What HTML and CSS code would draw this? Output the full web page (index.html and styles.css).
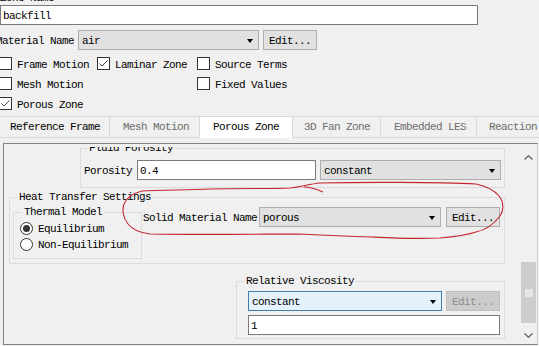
FILE: index.html
```html
<!DOCTYPE html>
<html>
<head>
<meta charset="utf-8">
<link rel="stylesheet" href="styles.css">
</head>
<body>
<div class="win">
  <div class="zone-label">Zone Name</div>
  <div class="textbox top-input">backfill</div>
  <div class="mat-row">
    <span class="lbl mat-lbl">Material Name</span>
    <div class="combo mat-combo"><span>air</span><i class="arrow"></i></div>
    <div class="btn">Edit...</div>
  </div>
  <div class="checks">
    <label class="chk"><i class="box"></i><span>Frame Motion</span></label>
    <label class="chk"><i class="box"><svg viewBox="0 0 11 11" width="11" height="11"><polyline points="1.5,5.5 4,8 9.5,2.5" fill="none" stroke="#4a4a4a" stroke-width="1"/></svg></i><span>Laminar Zone</span></label>
    <label class="chk"><i class="box"></i><span>Source Terms</span></label>
    <label class="chk"><i class="box"></i><span>Mesh Motion</span></label>
    <span></span>
    <label class="chk"><i class="box"></i><span>Fixed Values</span></label>
    <label class="chk"><i class="box"><svg viewBox="0 0 11 11" width="11" height="11"><polyline points="1.5,5.5 4,8 9.5,2.5" fill="none" stroke="#4a4a4a" stroke-width="1"/></svg></i><span>Porous Zone</span></label>
  </div>
  <div class="tabs">
    <div class="tab t1">Reference Frame</div>
    <div class="tab t2 dis">Mesh Motion</div>
    <div class="tab t3 active">Porous Zone</div>
    <div class="tab t4 dis">3D Fan Zone</div>
    <div class="tab t5 dis">Embedded LES</div>
    <div class="tab t6 dis">Reaction</div>
  </div>
  <div class="panel">
    <div class="scrollbox">
      <div class="viewport">
        <div class="clip">
          <div class="content">
            <fieldset class="grp fluid">
              <legend>Fluid Porosity</legend>
              <div class="row">
                <span class="lbl por-lbl">Porosity</span>
                <div class="textbox por-input">0.4</div>
                <div class="combo por-combo"><span>constant</span><i class="arrow"></i></div>
              </div>
            </fieldset>
            <fieldset class="grp heat">
              <legend>Heat Transfer Settings</legend>
              <div class="heat-body">
                <fieldset class="grp thermal">
                  <legend>Thermal Model</legend>
                  <div class="radios">
                    <label class="rad"><i class="circ on"></i><span>Equilibrium</span></label>
                    <label class="rad"><i class="circ"></i><span>Non-Equilibrium</span></label>
                  </div>
                </fieldset>
                <div class="row solid-row">
                  <span class="lbl solid-lbl">Solid Material Name</span>
                  <div class="combo solid-combo"><span>porous</span><i class="arrow"></i></div>
                  <div class="btn solid-btn">Edit...</div>
                </div>
              </div>
            </fieldset>
            <fieldset class="grp visc">
              <legend>Relative Viscosity</legend>
              <div class="row">
                <div class="combo focus visc-combo"><span>constant</span><i class="arrow"></i></div>
                <div class="btn disabled">Edit...</div>
              </div>
              <div class="textbox visc-input">1</div>
            </fieldset>
          </div>
        </div>
      </div>
      <div class="sbar">
        <div class="sarrow up"><svg viewBox="0 0 9 5" width="9" height="5"><polyline points="0.5,4.5 4.5,0.8 8.5,4.5" fill="none" stroke="#606060" stroke-width="1.3"/></svg></div>
        <div class="strack"><div class="thumb"><i class="grip"></i></div></div>
        <div class="sarrow"><svg viewBox="0 0 9 5" width="9" height="5"><polyline points="0.5,0.5 4.5,4.2 8.5,0.5" fill="none" stroke="#606060" stroke-width="1.3"/></svg></div>
      </div>
    </div>
  </div>
  <svg class="ink" width="539" height="346" viewBox="0 0 539 346">
    <path d="M323,200 C316,197 310,195 304,195 M320,191 C360,190 440,190 476,192 C486,194 494,198 499,204 C504,210 504,218 500,224 C494,232 486,238 476,240 C464,244 452,245 440,246 C410,247 392,246 372,245 C340,244 320,243 300,242 C270,242 200,243 150,242 C140,241 133,238 128,232 C123,226 122,218 124,212 C127,205 134,201 142,199 C160,198 190,198 210,197 C240,196 270,197 290,196 C300,195 310,192 320,191" fill="none" stroke="#c4262e" stroke-width="1.1"/>
  </svg>
</div>
</body>
</html>
```

FILE: styles.css
```css
* { box-sizing: border-box; }
html, body { margin: 0; padding: 0; }
body {
  width: 539px;
  height: 346px;
  overflow: hidden;
  background: #f0f0f0;
  color: #000;
  font-family: "Liberation Mono", "DejaVu Sans Mono", monospace;
  font-size: 11px;
  line-height: 12px;
  letter-spacing: -0.6px;
}
.win { position: relative; width: 539px; height: 346px; }

.zone-label { margin-top: -8px; height: 12px; margin-bottom: 1px; }

.textbox {
  height: 20px;
  background: #fff;
  border: 1px solid #7a7a7a;
  line-height: 18px;
  padding: 1px 0 0 2px;
  white-space: nowrap;
}
.top-input { width: 478px; }

.lbl { line-height: 20px; height: 20px; padding-top: 1px; white-space: nowrap; }
.row { display: flex; align-items: center; }

.mat-row { display: flex; align-items: center; margin-top: 5px; margin-left: -4px; }
.mat-lbl { width: 82px; }
.combo {
  position: relative;
  height: 20px;
  background: #e1e1e1;
  border: 1px solid #adadad;
  line-height: 18px;
  padding: 1px 0 0 3px;
  white-space: nowrap;
}
.combo .arrow {
  position: absolute;
  right: 5px;
  top: 8px;
  width: 0; height: 0;
  border-left: 3.5px solid transparent;
  border-right: 3.5px solid transparent;
  border-top: 4px solid #000;
}
.mat-combo { width: 181px; }
.btn {
  height: 20px;
  width: 54px;
  background: #e1e1e1;
  border: 1px solid #adadad;
  line-height: 18px;
  padding-top: 1px;
  text-align: center;
  margin-left: 4px;
}
.btn.disabled { background: #cccccc; border-color: #bfbfbf; color: #8c8c8c; }

.checks {
  display: grid;
  grid-template-columns: 98px 100px auto;
  grid-auto-rows: 13px;
  row-gap: 7px;
  margin-top: 7px;
  margin-left: -1px;
}
.chk { display: flex; align-items: flex-start; white-space: nowrap; }
.chk span { line-height: 13px; padding-top: 2px; }
.box {
  width: 13px; height: 13px;
  border: 1px solid #333;
  background: #fff;
  margin-right: 5px;
  flex: none;
  display: block;
}
.box svg { display: block; }

.tabs {
  display: flex;
  margin-top: 6px;
  height: 22px;
  border-bottom: 1px solid #d9d9d9;
  white-space: nowrap;
}
.tab {
  height: 21px;
  line-height: 21px;
  border-top: 1px solid #d9d9d9;
  border-right: 1px solid #d9d9d9;
  background: #f0f0f0;
  flex: none;
}
.tab.dis { color: #6d6d6d; }
.t1 { width: 110px; padding-left: 10px; }
.t2 { width: 90px; padding-left: 13px; }
.t3 { width: 93px; padding-left: 13px; }
.t4 { width: 88px; padding-left: 11px; }
.t5 { width: 96px; padding-left: 13px; }
.t6 { width: 80px; padding-left: 12px; border-right: none; }
.tab.active { background: #fff; height: 22px; }

.panel { padding-top: 5px; }
.scrollbox {
  display: flex;
  margin-left: 3px;
  width: 535px;
  height: 202px;
  border: 1px solid #828282;
  border-right-color: #d0d0d0;
}
.viewport { width: 516px; height: 200px; padding-top: 3px; }
.clip { height: 197px; overflow: hidden; }
.content { margin-top: -5px; }

.grp {
  margin: 0;
  padding: 0;
  border: 1px solid #dcdcdc;
  min-width: 0;
}
.grp legend {
  padding: 0 2px;
  margin-left: 7px;
  line-height: 12px;
  height: 12px;
  white-space: nowrap;
}
.fluid { margin-left: 76px; width: 425px; padding: 6px 0 7px 3px; }
.fluid legend { margin-left: 3px; }
.por-lbl { width: 53px; }
.por-input { width: 179px; }
.por-combo { width: 181px; margin-left: 4px; }

.heat { margin-top: 3px; margin-left: 5px; width: 496px; padding: 3px 0 4px 0; }
.heat-body { display: flex; align-items: flex-start; }
.thermal { margin-left: 3px; width: 129px; padding: 4px 0 7px 6px; }
.thermal legend { margin-left: 2px; }
.radios { display: flex; flex-direction: column; row-gap: 3px; }
.rad { display: flex; align-items: flex-start; height: 13px; white-space: nowrap; }
.rad span { line-height: 13px; padding-top: 1px; }
.circ {
  width: 13px; height: 13px;
  border: 1px solid #333;
  border-radius: 50%;
  background: #fff;
  margin-right: 5px;
  display: flex; align-items: center; justify-content: center;
  flex: none;
}
.circ.on::after { content: ""; width: 7px; height: 7px; border-radius: 50%; background: #333; }
.solid-row { margin-top: 1px; margin-left: 1px; }
.solid-lbl { width: 116px; }
.solid-combo { width: 182px; }
.solid-btn { margin-left: 5px; }

.visc { margin-top: 11px; margin-left: 232px; width: 269px; padding: 4px 0 3px 11px; }
.visc legend { margin-left: -4px; }
.visc-combo { width: 194px; }
.combo.focus { background: #e5f1fb; border-color: #3c7fb1; }
.visc-input { width: 252px; margin-top: 4px; }

.sbar { width: 17px; height: 200px; display: flex; flex-direction: column; background: #f0f0f0; }
.sarrow { height: 17px; display: flex; align-items: center; justify-content: center; flex: none; }
.sarrow.up { height: 27px; }
.strack { flex: 1; padding: 91px 1px 0 1px; }
.thumb { height: 61px; background: #cdcdcd; display: flex; align-items: center; justify-content: center; }
.grip { width: 8px; height: 8px; background: #e6e6e6; display: block; }

.ink { position: absolute; left: 0; top: 0; pointer-events: none; }
```
